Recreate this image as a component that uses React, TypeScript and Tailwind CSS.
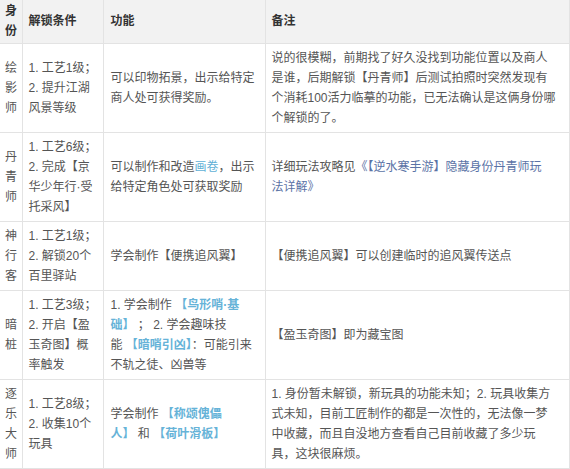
import type { ReactNode } from "react";

const link = "text-[#5fb0d6]";
const boldLink = "text-[#66b3d8] font-semibold";
const noteLink = "text-[#5b73a6]";

function Lines({ lines }: { lines: ReactNode[] }) {
  return (
    <>
      {lines.map((l, i) => (
        <div key={i} className="whitespace-nowrap">
          {l}
        </div>
      ))}
    </>
  );
}

type Row = {
  name: string;
  cond: ReactNode[];
  func: ReactNode[];
  note: ReactNode[];
};

const rows: Row[] = [
  {
    name: "绘影师",
    cond: ["1. 工艺1级；", "2. 提升江湖", "风景等级"],
    func: ["可以印物拓景，出示给特定", "商人处可获得奖励。"],
    note: [
      "说的很模糊，前期找了好久没找到功能位置以及商人",
      "是谁，后期解锁【丹青师】后测试拍照时突然发现有",
      "个消耗100活力临摹的功能，已无法确认是这俩身份哪",
      "个解锁的了。",
    ],
  },
  {
    name: "丹青师",
    cond: ["1. 工艺6级；", "2. 完成【京", "华少年行·受", "托采风】"],
    func: [
      <>
        可以制作和改造<span className={link}>画卷</span>，出示
      </>,
      "给特定角色处可获取奖励",
    ],
    note: [
      <>
        详细玩法攻略见<span className={noteLink}>《【逆水寒手游】隐藏身份丹青师玩</span>
      </>,
      <span className={noteLink}>法详解》</span>,
    ],
  },
  {
    name: "神行客",
    cond: ["1. 工艺1级；", "2. 解锁20个", "百里驿站"],
    func: ["学会制作【便携追风翼】"],
    note: ["【便携追风翼】可以创建临时的追风翼传送点"],
  },
  {
    name: "暗桩",
    cond: ["1. 工艺3级；", "2. 开启【盈", "玉奇图】概", "率触发"],
    func: [
      <>
        1. 学会制作 <span className={boldLink}>【鸟形哨·基</span>
      </>,
      <>
        <span className={boldLink}>础】</span> ； 2. 学会趣味技
      </>,
      <>
        能 <span className={boldLink}>【暗哨引凶】</span>：可能引来
      </>,
      "不轨之徒、凶兽等",
    ],
    note: ["【盈玉奇图】即为藏宝图"],
  },
  {
    name: "逐乐大师",
    cond: ["1. 工艺8级；", "2. 收集10个", "玩具"],
    func: [
      <>
        学会制作 <span className={boldLink}>【称颂傀儡</span>
      </>,
      <>
        <span className={boldLink}>人】</span> 和 <span className={boldLink}>【荷叶滑板】</span>
      </>,
    ],
    note: [
      "1. 身份暂未解锁，新玩具的功能未知；2. 玩具收集方",
      "式未知，目前工匠制作的都是一次性的，无法像一梦",
      "中收藏，而且自没地方查看自己目前收藏了多少玩",
      "具，这块很麻烦。",
    ],
  },
];

export default function App() {
  return (
    <div className="w-[570px] h-[469px] overflow-hidden bg-white font-['Liberation_Sans','Noto_Sans_CJK_SC',sans-serif] text-[12px] leading-[20px] text-[#555]">
      <table className="table-fixed border-collapse w-[569px]">
        <colgroup>
          <col className="w-[22px]" />
          <col className="w-[81px]" />
          <col className="w-[162px]" />
          <col className="w-[304px]" />
        </colgroup>
        <thead>
          <tr className="bg-[#f2f2f2] h-[43px] text-[#333] font-bold text-left">
            <th className="border-r border-b border-[#e3e3e3] pl-[5px] pr-0 align-middle font-bold">
              <div>身</div>
              <div>份</div>
            </th>
            <th className="border border-t-0 border-[#e3e3e3] px-[6px] align-middle font-bold">解锁条件</th>
            <th className="border border-t-0 border-[#e3e3e3] px-[7px] align-middle font-bold">功能</th>
            <th className="border border-t-0 border-[#e3e3e3] px-[6px] align-middle font-bold">备注</th>
          </tr>
        </thead>
        <tbody>
          {rows.map((r) => (
            <tr key={r.name}>
              <td className="border-r border-b border-[#e3e3e3] pl-[5px] pr-0 py-1 align-middle">
                <Lines lines={r.name.split("")} />
              </td>
              <td className="border border-[#e3e3e3] px-[6px] py-1 align-middle">
                <Lines lines={r.cond} />
              </td>
              <td className="border border-[#e3e3e3] px-[7px] py-1 align-middle">
                <Lines lines={r.func} />
              </td>
              <td className="border border-[#e3e3e3] px-[6px] py-1 align-middle">
                <Lines lines={r.note} />
              </td>
            </tr>
          ))}
        </tbody>
      </table>
    </div>
  );
}
